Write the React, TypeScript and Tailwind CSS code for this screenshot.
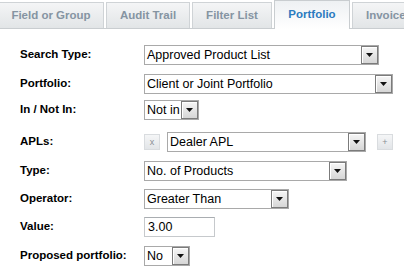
import React from "react";

const font = { fontFamily: '"Liberation Sans", Arial, sans-serif' };

interface Tab {
  label: string;
  width: string;
  active?: boolean;
}

const tabs: Tab[] = [
  { label: "Field or Group", width: "w-[106px] -ml-[2px] justify-center" },
  { label: "Audit Trail", width: "w-[84px] justify-center" },
  { label: "Filter List", width: "w-[80px] justify-center" },
  { label: "Portfolio", width: "w-[76px] justify-center", active: true },
  { label: "Invoice", width: "w-[70px] pl-[13px]" },
];

const Arrow = () => (
  <svg width="7" height="4" viewBox="0 0 7 4">
    <path d="M0 0h7L3.5 4z" fill="#111" />
  </svg>
);

const Select = ({ value, width }: { value: string; width: string }) => (
  <div className={`flex h-[20px] items-stretch border border-[#a9a9a9] bg-white ${width}`}>
    <span className="flex-1 overflow-hidden whitespace-nowrap pl-[2px] text-[12.5px] leading-[18px] text-black">
      {value}
    </span>
    <span className="flex w-[17px] shrink-0 items-center justify-center border border-[#7b7b7b] bg-gradient-to-b from-[#f6f6f6] to-[#d6d6d6] shadow-[inset_1px_1px_0_#fff]">
      <Arrow />
    </span>
  </div>
);

const SmallButton = ({ glyph }: { glyph: string }) => (
  <span className="flex h-[16px] w-[16px] items-center justify-center border border-[#d9dcdf] bg-gradient-to-b from-[#f5f6f7] to-[#e2e5e8] text-[9px] leading-none text-[#8a8f94]">
    {glyph}
  </span>
);

const Row = ({
  label,
  mt,
  children,
}: {
  label: string;
  mt: string;
  children: React.ReactNode;
}) => (
  <div className={`flex items-center ${mt}`}>
    <div className="w-[124px] shrink-0 text-[11.5px] font-bold text-black">{label}</div>
    <div className="flex items-center">{children}</div>
  </div>
);

export default function App() {
  return (
    <div className="h-[275px] w-[404px] overflow-hidden bg-white" style={font}>
      <div className="flex h-[29px] items-end gap-[2px] border-b border-[#c9cdd0]">
        {tabs.map((tab) =>
          tab.active ? (
            <div
              key={tab.label}
              className={`-mb-[1px] flex h-[29px] shrink-0 items-center border border-b-0 border-[#c9cdd0] bg-gradient-to-b from-[#eef1f3] to-white text-[11.5px] font-bold text-[#2b7bc0] ${tab.width}`}
            >
              {tab.label}
            </div>
          ) : (
            <div
              key={tab.label}
              className={`flex h-[26px] shrink-0 items-center whitespace-nowrap border border-b-0 border-[#cfd3d6] bg-gradient-to-b from-[#f4f5f6] to-[#e2e5e7] text-[11.5px] font-bold text-[#8594a2] ${tab.width}`}
            >
              {tab.label}
            </div>
          )
        )}
      </div>

      <div className="flex flex-col pl-[20px]">
        <Row label="Search Type:" mt="mt-[16px]">
          <Select value="Approved Product List" width="w-[235px]" />
        </Row>
        <Row label="Portfolio:" mt="mt-[9px]">
          <Select value="Client or Joint Portfolio" width="w-[249px]" />
        </Row>
        <Row label="In / Not In:" mt="mt-[6px]">
          <Select value="Not in" width="w-[55px]" />
        </Row>
        <Row label="APLs:" mt="mt-[12px]">
          <SmallButton glyph="x" />
          <div className="ml-[7px]">
            <Select value="Dealer APL" width="w-[199px]" />
          </div>
          <div className="ml-[11px]">
            <SmallButton glyph="+" />
          </div>
        </Row>
        <Row label="Type:" mt="mt-[9px]">
          <Select value="No. of Products" width="w-[203px]" />
        </Row>
        <Row label="Operator:" mt="mt-[8px]">
          <Select value="Greater Than" width="w-[145px]" />
        </Row>
        <Row label="Value:" mt="mt-[8px]">
          <div className="flex h-[20px] w-[71px] items-center border border-[#c6c9cc] border-t-[#a9adb1] bg-white pl-[3px] text-[12.5px] text-black">
            3.00
          </div>
        </Row>
        <Row label="Proposed portfolio:" mt="mt-[9px]">
          <Select value="No" width="w-[46px]" />
        </Row>
      </div>
    </div>
  );
}
